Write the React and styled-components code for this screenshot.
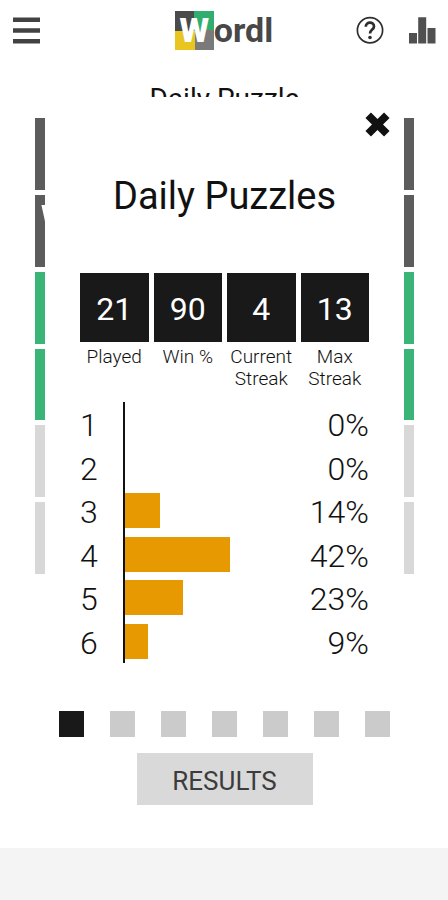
import React from "react";
import styled, { createGlobalStyle } from "styled-components";

const GlobalStyle = createGlobalStyle`
  * { box-sizing: border-box; }
  body {
    margin: 0;
    background: #f4f4f4;
    color: #111;
    font-family: Roboto, "Liberation Sans", sans-serif;
  }
`;

const Screen = styled.div`
  background: #fff;
`;

const Header = styled.header`
  display: grid;
  grid-template-columns: 1fr auto 1fr;
  align-items: center;
  height: 60px;
  padding: 0 12px;
`;

const Actions = styled.div`
  display: flex;
  justify-content: flex-end;
  gap: 24px;
`;

const IconButton = styled.button`
  display: grid;
  place-items: center;
  width: ${(p) => p.$size}px;
  height: ${(p) => p.$size}px;
  padding: 0;
  border: 0;
  background: none;
  cursor: pointer;

  svg {
    display: block;
    width: 100%;
    height: 100%;
  }
`;

const Logo = styled.div`
  display: flex;
  align-items: center;
  padding-top: 1px;
  color: #484848;
  font-size: 34px;
  font-weight: 700;
  line-height: 39px;
`;

const LogoTile = styled.span`
  width: 39px;
  height: 39px;
  text-align: center;
  color: #fff;
  font-weight: 900;
  background: conic-gradient(#2fae70 25%, #7a7a7a 25% 50%, #e8c51f 50% 75%, #4b4b4b 75%);
`;

const Stage = styled.main`
  display: grid;
`;

const Game = styled.section`
  grid-area: 1 / 1;
  padding: 23px 34px 0 35px;
`;

const GameTitle = styled.h1`
  margin: 0 0 3px;
  font-size: 28px;
  font-weight: 400;
  line-height: 32px;
  text-align: center;
`;

const Board = styled.div`
  display: grid;
  grid-template-columns: repeat(5, 1fr);
  grid-template-rows: repeat(6, 1fr);
  gap: 5px;
  height: 456px;
`;

const tones = { miss: "#5c5c5c", hit: "#3bb478", empty: "#d8d8d8" };

const Cell = styled.div`
  display: grid;
  place-items: center;
  background: ${(p) => tones[p.$tone]};
  color: #fff;
  font-size: 70px;
  font-weight: 700;
  line-height: 70px;
`;

const Modal = styled.section`
  grid-area: 1 / 1;
  z-index: 1;
  display: flex;
  flex-direction: column;
  margin: 37px 44px 0 45px;
  padding: 15px 14px 43px;
  background: #fff;
`;

const CloseRow = styled.div`
  display: flex;
  justify-content: flex-end;
`;

const ModalTitle = styled.h2`
  margin: 35px 0 53px;
  font-size: 38px;
  font-weight: 400;
  line-height: 48px;
  text-align: center;
`;

const Stats = styled.dl`
  display: grid;
  grid-template-columns: repeat(4, 1fr);
  gap: 5px;
  margin: 0 21px 12px;
`;

const Stat = styled.div`
  display: flex;
  flex-direction: column-reverse;
  justify-content: flex-end;
  gap: 4px;
  text-align: center;
`;

const StatValue = styled.dd`
  margin: 0;
  padding-top: 3px;
  background: #191919;
  color: #fff;
  font-size: 32px;
  font-weight: 400;
  line-height: 66px;
`;

const StatLabel = styled.dt`
  min-height: 44px;
  font-size: 19px;
  font-weight: 300;
  line-height: 22px;
`;

const Chart = styled.div`
  display: grid;
  grid-template-rows: repeat(6, 1fr);
  height: 261px;
  margin: 0 21px;
`;

const ChartRow = styled.div`
  display: grid;
  grid-template-columns: 43px 1fr 69px;
  align-items: center;
  font-size: 32px;
  font-weight: 350;
  line-height: 36px;
`;

const Figure = styled.span`
  padding-top: 3px;
  text-align: ${(p) => p.$align};
`;

const Track = styled.div`
  display: flex;
  align-items: center;
  align-self: stretch;
  border-left: 2px solid #111;
`;

const Bar = styled.div`
  height: 35px;
  background: #e69900;
`;

const Pager = styled.nav`
  display: flex;
  justify-content: space-between;
  margin: 48px 0 16px;
`;

const PageDot = styled.button`
  width: 25px;
  height: 26px;
  padding: 0;
  border: 0;
  background: ${(p) => (p.$active ? "#191919" : "#cbcbcb")};
  cursor: pointer;
`;

const ResultsButton = styled.button`
  align-self: center;
  width: 176px;
  height: 52px;
  padding: 3px 0 0;
  border: 0;
  background: #d9d9d9;
  color: #3c3c3c;
  font-family: inherit;
  font-size: 26px;
  cursor: pointer;
`;

const rows = ["miss", "miss", "hit", "hit", "empty", "empty"];
const cells = rows.flatMap((tone, r) =>
  Array.from({ length: 5 }, (_, c) => ({ tone, letter: r === 1 && c === 0 ? "W" : "" }))
);
const stats = [
  ["Played", 21],
  ["Win %", 90],
  ["Current Streak", 4],
  ["Max Streak", 13],
];
const distribution = [0, 0, 14, 42, 23, 9];
const FULL_SCALE = 70;

const MenuIcon = () => (
  <svg viewBox="0 0 28 28" aria-hidden="true">
    <path d="M1 3.700h27M1 14.500h27M1 25.200h27" stroke="#424242" strokeWidth="4.600" />
  </svg>
);

const HelpIcon = () => (
  <svg viewBox="0 0 28 28" fill="none" stroke="#2e2e2e" aria-hidden="true">
    <circle cx="14" cy="14.300" r="12.600" strokeWidth="1.700" />
    <path d="M9.800 10.800C9.800 5.300 18 5.300 18 10.500C18 13.500 14 13.800 14 17.600" strokeWidth="2.700" />
    <circle cx="14" cy="21.500" r="1.800" fill="#2e2e2e" stroke="none" />
  </svg>
);

const ChartIcon = () => (
  <svg viewBox="0 0 28 28" fill="#505050" aria-hidden="true">
    <path d="M1 17h8v10.500H1zM10.200 1.200h8v26.300h-8zM19.500 12h8v15.500h-8z" />
  </svg>
);

const CloseIcon = () => (
  <svg viewBox="0 0 25 25" aria-hidden="true">
    <path d="M3.200 3.200L21.800 21.800M21.800 3.200L3.200 21.800" stroke="#111" strokeWidth="7.800" />
  </svg>
);

export default function App() {
  return (
    <Screen>
      <GlobalStyle />
      <Header>
        <IconButton $size={28} aria-label="Menu"><MenuIcon /></IconButton>
        <Logo><LogoTile>W</LogoTile>ordl</Logo>
        <Actions>
          <IconButton $size={28} aria-label="Help"><HelpIcon /></IconButton>
          <IconButton $size={28} aria-label="Statistics"><ChartIcon /></IconButton>
        </Actions>
      </Header>
      <Stage>
        <Game>
          <GameTitle>Daily Puzzle</GameTitle>
          <Board>
            {cells.map((cell, i) => (
              <Cell key={i} $tone={cell.tone}>{cell.letter}</Cell>
            ))}
          </Board>
        </Game>
        <Modal role="dialog" aria-labelledby="stats-title">
          <CloseRow>
            <IconButton $size={25} aria-label="Close"><CloseIcon /></IconButton>
          </CloseRow>
          <ModalTitle id="stats-title">Daily Puzzles</ModalTitle>
          <Stats>
            {stats.map(([label, value]) => (
              <Stat key={label}>
                <StatLabel>{label}</StatLabel>
                <StatValue>{value}</StatValue>
              </Stat>
            ))}
          </Stats>
          <Chart>
            {distribution.map((pct, i) => (
              <ChartRow key={i}>
                <Figure $align="left">{i + 1}</Figure>
                <Track>
                  <Bar style={{ width: `${(pct / FULL_SCALE) * 100}%` }} />
                </Track>
                <Figure $align="right">{pct}%</Figure>
              </ChartRow>
            ))}
          </Chart>
          <Pager aria-label="Statistics pages">
            {Array.from({ length: 7 }, (_, i) => (
              <PageDot key={i} $active={i === 0} aria-label={`Page ${i + 1}`} />
            ))}
          </Pager>
          <ResultsButton>RESULTS</ResultsButton>
        </Modal>
      </Stage>
    </Screen>
  );
}
